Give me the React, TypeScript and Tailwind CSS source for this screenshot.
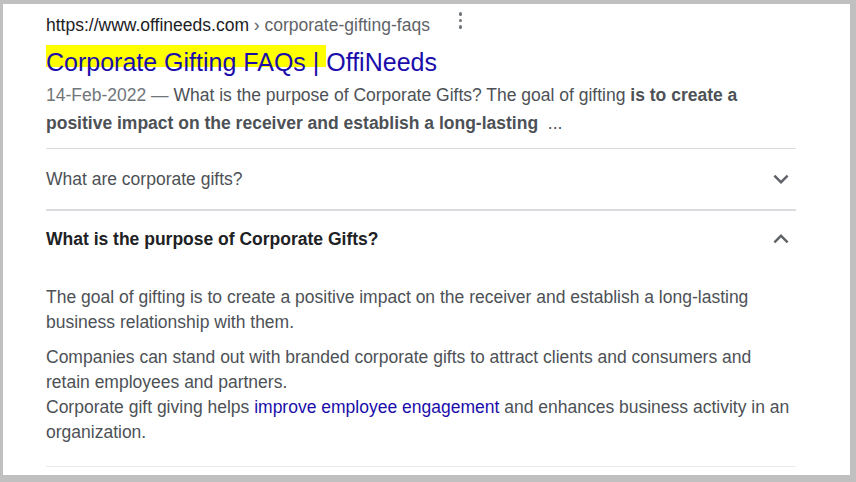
import React from "react";

function ChevronDown() {
  return (
    <svg width="30" height="30" viewBox="0 0 24 24" fill="#5f6368">
      <path d="M16.59 8.59L12 13.17 7.41 8.59 6 10l6 6 6-6z" />
    </svg>
  );
}
function ChevronUp() {
  return (
    <svg width="30" height="30" viewBox="0 0 24 24" fill="#5f6368">
      <path d="M7.41 15.41L12 10.83l4.59 4.58L18 14l-6-6-6 6z" />
    </svg>
  );
}

export default function App() {
  return (
    <div
      className="w-[856px] h-[482px] bg-[#c0c0c0] pt-[4px] pl-[3px] pr-[6px] pb-[7px]"
      style={{ fontFamily: '"Liberation Sans", Arial, sans-serif' }}
    >
      <div className="w-full h-full bg-white pl-[43px] pr-[54px]">
        <div className="flex items-center h-[40px] pt-[2px]">
          <span className="text-[17.5px] text-[#202124]">https://www.offineeds.com</span>
          <span className="text-[17.5px] text-[#5f6368]">&nbsp;› corporate-gifting-faqs</span>
          <div className="flex flex-col gap-[3px] ml-[29px] self-start mt-[6px]">
            <span className="block w-[3.5px] h-[3.5px] rounded-full bg-[#70757a]" />
            <span className="block w-[3.5px] h-[3.5px] rounded-full bg-[#70757a]" />
            <span className="block w-[3.5px] h-[3.5px] rounded-full bg-[#70757a]" />
          </div>
        </div>
        <div className="text-[25px] leading-[32px] text-[#1a0dab] mt-[2px]">
          <span className="pt-[3px] bg-[linear-gradient(#ffff00,#ffff00)] bg-no-repeat bg-[length:100%_22px] bg-[position:0_0]">
            Corporate Gifting FAQs |{" "}
          </span>
          OffiNeeds
        </div>
        <div className="text-[17.5px] leading-[28px] text-[#4d5156] mt-[3px] pb-[11px] border-b border-[#dadce0]">
          <span className="text-[#70757a]">14-Feb-2022 — </span>What is the purpose of Corporate Gifts? The goal of gifting{" "}
          <b>is to create a positive impact on the receiver and establish a long-lasting</b>&nbsp; ...
        </div>
        <div className="flex items-center justify-between h-[62px] border-b-2 border-[#dadce0]">
          <span className="text-[17.5px] text-[#4d5156]">What are corporate gifts?</span>
          <ChevronDown />
        </div>
        <div className="flex items-center justify-between h-[56px]">
          <span className="text-[17.5px] font-bold text-[#202124]">What is the purpose of Corporate Gifts?</span>
          <ChevronUp />
        </div>
        <div className="text-[17.5px] leading-[25px] text-[#4d5156] pt-[18px] pb-[21px] border-b border-[#ebebeb]">
          <p>The goal of gifting is to create a positive impact on the receiver and establish a long-lasting business relationship with them.</p>
          <p className="mt-[10px]">Companies can stand out with branded corporate gifts to attract clients and consumers and retain employees and partners.</p>
          <p>
            Corporate gift giving helps <span className="text-[#1a0dab]">improve employee engagement</span> and enhances business activity in an organization.
          </p>
        </div>
      </div>
    </div>
  );
}
